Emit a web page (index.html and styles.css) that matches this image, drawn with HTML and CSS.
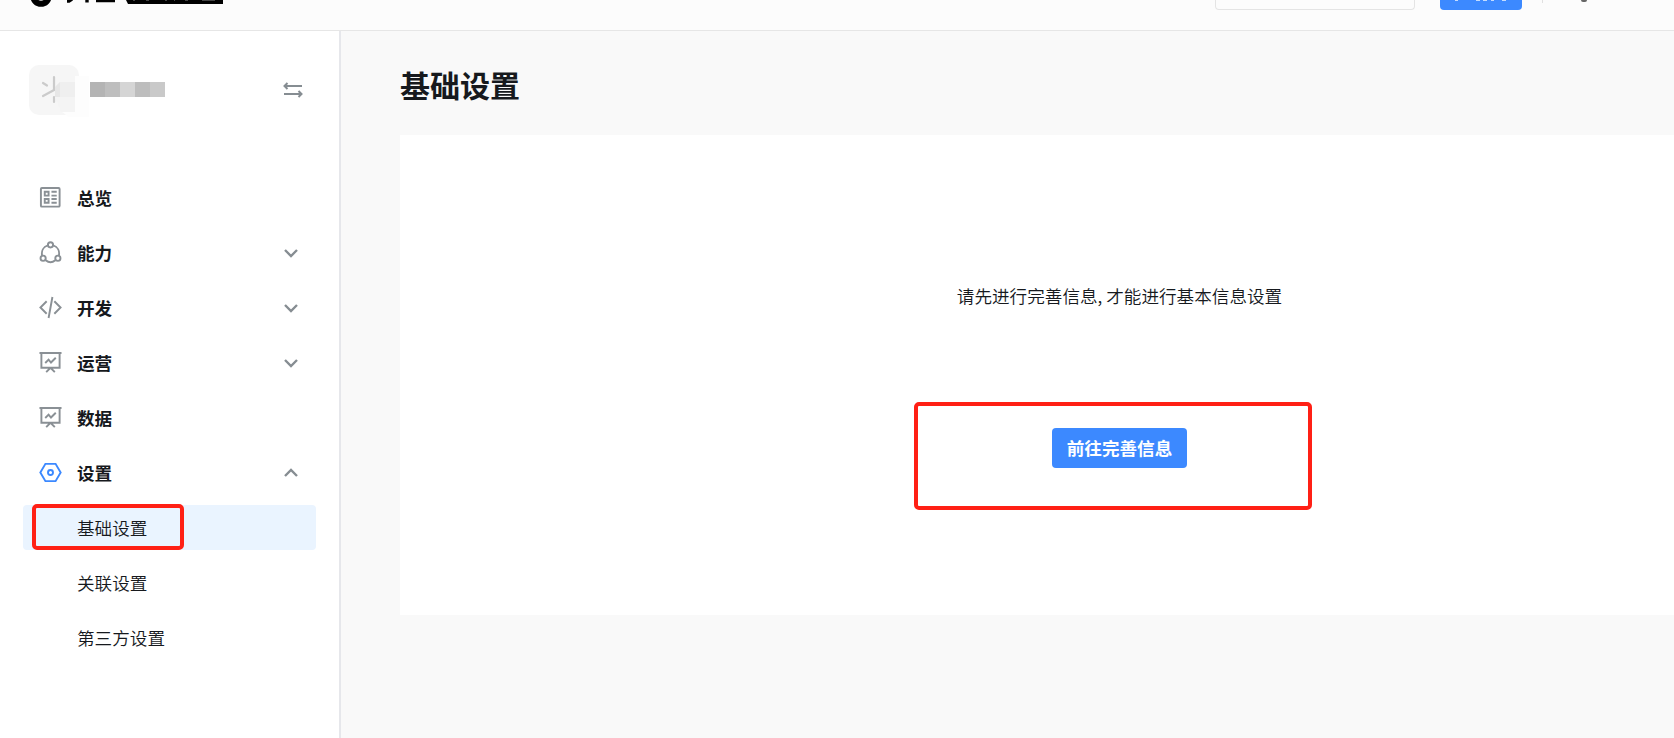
FILE: index.html
```html
<!DOCTYPE html>
<html lang="zh-CN">
<head>
    <meta charset="UTF-8">
    <meta name="viewport" content="width=device-width, initial-scale=1.0">
    <title>基础设置</title>
    <link rel="stylesheet" href="styles.css">
</head>
<body>
    <header class="header">
        <svg class="logo" width="200" height="8" viewBox="0 0 200 8">
            <circle cx="17" cy="-4" r="7.8" fill="none" stroke="#000" stroke-width="6"/>
            <path d="M43 1 H45 L48 -1 M63 -2 V2.5 M72 0.5 H91" fill="none" stroke="#000" stroke-width="3.4"/>
            <path d="M102 0 H199 V4 H104 Z" fill="#000"/>
            <path d="M109 0.5 H111 M122 0.5 H125 M141 0.5 H143 M150 0.5 H151 M161 0.5 H164 M178 0.5 H191" fill="none" stroke="#444" stroke-width="1"/>
        </svg>
        <div class="header-right">
            <div class="search"></div>
            <button class="header-btn">
                <svg width="82" height="2" viewBox="0 0 82 2">
                    <path d="M15 0.5 H18 M36 0.5 H40 M43 0.5 H47 M51 0.5 H54 M62 0.5 H66" stroke="#c4dcff" stroke-width="1"/>
                </svg>
            </button>
            <div class="divider"></div>
            <div class="dot"></div>
        </div>
    </header>

    <div class="layout">
        <aside class="sidebar">
            <div class="app">
                <svg class="app-icon" width="60" height="54" viewBox="0 0 60 54">
                    <rect width="50" height="50" rx="10" fill="#f6f6f6"/>
                    <path d="M25 12 V25 L14 31 M14 18 L18 20.5 M25 32 V37" fill="none" stroke="#cbcbcb" stroke-width="2.2" stroke-linecap="round"/>
                    <path d="M26 22 L31 17 H46 V32 H26 Z" fill="#efefef"/>
                    <path d="M26 22 L31 17 V32 H26 Z" fill="#e7e7e7"/>
                    <path d="M26 32 H46 V47 H32 Z" fill="#f4f4f4"/>
                    <path d="M46 11 H60 V52 H40 L33 47 H46 Z" fill="#fdfdfd"/>
                </svg>
                <div class="app-name">
                    <span class="c1"></span><span class="c2"></span><span class="c3"></span><span class="c4"></span><span class="c5"></span>
                </div>
                <svg class="switch" width="20" height="16" viewBox="0 0 20 16">
                    <path d="M19 4 H1.5 M4.5 1 L1.5 4 L4.5 7 M1 12 H18.5 M15.5 9 L18.5 12 L15.5 15" fill="none" stroke="#868d92" stroke-width="2"/>
                </svg>
            </div>

            <nav class="menu">
                <div class="menu-item">
                    <svg class="icon" viewBox="0 0 24 24">
                        <rect x="2" y="2" width="19.5" height="19.5" rx="1"/>
                        <path d="M6 6 H10 V10 H6 Z M6 13.5 H10 V17.5 H6 Z M13 6 H18.5 M13 10 H18.5 M13 13.5 H18.5 M13 17.5 H18.5"/>
                    </svg>
                    <span>总览</span>
                </div>
                <div class="menu-item">
                    <svg class="icon" viewBox="0 0 24 24">
                        <circle cx="12" cy="4" r="2.7"/>
                        <circle cx="4.3" cy="18" r="2.7"/>
                        <circle cx="19.7" cy="18" r="2.7"/>
                        <path d="M9.2 4.5 C4.5 6 2.2 10.5 3.3 15.5 M14.8 4.5 C19.5 6 21.8 10.5 20.7 15.5 M7 20 C10 22.6 14 22.6 17 20"/>
                    </svg>
                    <span>能力</span>
                    <svg class="arrow" viewBox="0 0 16 10"><path d="M2 2 L8 8 L14 2"/></svg>
                </div>
                <div class="menu-item">
                    <svg class="icon" viewBox="0 0 24 24">
                        <path d="M8 5.5 L1.5 12 L8 18.5 M16 5.5 L22.5 12 L16 18.5 M14 1 L10 23"/>
                    </svg>
                    <span>开发</span>
                    <svg class="arrow" viewBox="0 0 16 10"><path d="M2 2 L8 8 L14 2"/></svg>
                </div>
                <div class="menu-item">
                    <svg class="icon" viewBox="0 0 24 24">
                        <path d="M0.5 2 H23.5 M2.5 2 V17.5 H21.5 V2 M6.5 12.5 L10 9 L12.5 12 L17.5 7 M12 17.5 L7.5 22 M12 17.5 L16.5 22"/>
                    </svg>
                    <span>运营</span>
                    <svg class="arrow" viewBox="0 0 16 10"><path d="M2 2 L8 8 L14 2"/></svg>
                </div>
                <div class="menu-item">
                    <svg class="icon" viewBox="0 0 24 24">
                        <path d="M0.5 2 H23.5 M2.5 2 V17.5 H21.5 V2 M6.5 12.5 L10 9 L12.5 12 L17.5 7 M12 17.5 L7.5 22 M12 17.5 L16.5 22"/>
                    </svg>
                    <span>数据</span>
                </div>
                <div class="menu-item">
                    <svg class="icon icon-active" viewBox="0 0 24 24">
                        <path d="M6.7 3 H17.3 L22.6 12 L17.3 21 H6.7 L1.4 12 Z"/>
                        <circle cx="12" cy="12" r="2.6"/>
                    </svg>
                    <span>设置</span>
                    <svg class="arrow" viewBox="0 0 16 10"><path d="M2 8 L8 2 L14 8"/></svg>
                </div>
                <div class="sub-item active">基础设置<div class="mark mark-menu"></div></div>
                <div class="sub-item">关联设置</div>
                <div class="sub-item">第三方设置</div>
            </nav>
        </aside>

        <main class="content">
            <h1 class="title">基础设置</h1>
            <section class="panel">
                <p class="tip">请先进行完善信息, 才能进行基本信息设置</p>
                <div class="action">
                    <button class="btn">前往完善信息</button>
                    <div class="mark mark-btn"></div>
                </div>
            </section>
        </main>
    </div>
</body>
</html>
```

FILE: styles.css
```css
* {
    box-sizing: border-box;
}

body {
    margin: 0;
    height: 100vh;
    overflow: hidden;
    display: flex;
    flex-direction: column;
    background: #f9f9f9;
    color: #16191d;
    font-family: "Noto Sans CJK SC", sans-serif;
    font-size: 17.6px;
}

/* Header */
.header {
    flex: none;
    height: 31px;
    display: flex;
    justify-content: space-between;
    align-items: flex-start;
    padding-left: 24px;
    background: #fcfcfc;
    border-bottom: 1px solid #e6e6e6;
}

.header-right {
    display: flex;
    align-items: flex-start;
    width: 459px;
}

.search {
    width: 200px;
    height: 10px;
    border: 1px solid #e4e4e4;
    border-top: none;
    border-radius: 0 0 4px 4px;
}

.header-btn {
    display: flex;
    align-items: flex-start;
    width: 82px;
    height: 10px;
    margin-left: 25px;
    padding: 0;
    border: none;
    border-radius: 0 0 4px 4px;
    background: #3c89ff;
}

.divider {
    width: 1px;
    height: 3px;
    margin-left: 20px;
    background: #e0e0e0;
}

.dot {
    width: 6px;
    height: 2px;
    margin-left: 38px;
    border-radius: 0 0 3px 3px;
    background: #666;
}

.layout {
    flex: 1;
    display: flex;
    min-height: 0;
}

/* Sidebar */
.sidebar {
    flex: none;
    width: 341px;
    background: #fff;
    border-right: 2px solid #e6e7eb;
}

.app {
    display: flex;
    height: 144px;
    padding: 34px 36px 0 29px;
}

.app-name {
    display: flex;
    margin: 17px 0 0 1px;
}

.app-name span {
    width: 15px;
    height: 15px;
}

.c1 { background: #b4b4b4; }
.c2 { background: #bebebe; }
.c3 { background: #d5d5d5; }
.c4 { background: #bdbdbd; }
.c5 { background: #c9c9c9; }

.switch {
    margin: 17px 0 0 auto;
}

.menu {
    display: flex;
    flex-direction: column;
    gap: 10px;
    padding: 0 23px;
}

.menu-item {
    display: flex;
    align-items: center;
    height: 45px;
    padding: 0 17px 0 16px;
    font-weight: 700;
}

.icon {
    width: 23px;
    height: 23px;
    margin-right: 15px;
    fill: none;
    stroke: #8a9095;
    stroke-width: 2;
}

.icon-active {
    stroke: #3c89ff;
}

.arrow {
    width: 16px;
    height: 10px;
    margin-left: auto;
    fill: none;
    stroke: #868d92;
    stroke-width: 2.4;
}

.sub-item {
    position: relative;
    height: 45px;
    padding-left: 54px;
    line-height: 45px;
    border-radius: 4px;
    font-weight: 350;
}

.sub-item.active {
    background: #eaf4ff;
}

/* Red frames */
.mark {
    position: absolute;
    border: 4px solid #ff2015;
    border-radius: 5px;
}

.mark-menu {
    left: 9px;
    top: -1px;
    width: 152px;
    height: 46px;
}

.mark-btn {
    left: -138px;
    top: -26px;
    width: 398px;
    height: 108px;
}

/* Content */
.content {
    flex: 1;
    padding-left: 59px;
}

.title {
    margin: 0;
    height: 104px;
    line-height: 107px;
    font-size: 30px;
    font-weight: 700;
}

.panel {
    display: flex;
    flex-direction: column;
    align-items: center;
    height: 480px;
    padding: 148px 0 0 165px;
    background: #fff;
}

.tip {
    margin: 0;
    height: 145px;
    line-height: 26px;
    font-weight: 350;
}

.action {
    position: relative;
}

.btn {
    display: block;
    width: 135px;
    height: 40px;
    padding: 0 0 2px;
    border: none;
    border-radius: 4px;
    background: #3c89ff;
    color: #fff;
    font: inherit;
    font-weight: 700;
}
```
